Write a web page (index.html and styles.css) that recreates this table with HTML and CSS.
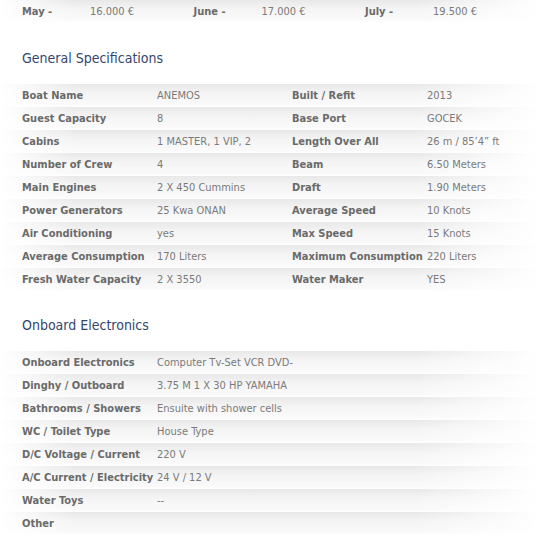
FILE: index.html
```html
<!DOCTYPE html>
<html>
<head>
<meta charset="utf-8">
<link rel="stylesheet" href="styles.css">
</head>
<body>
<div class="page">
  <div class="row prices">
    <span class="lab">May -</span><span class="val">16.000 €</span>
    <span class="lab">June -</span><span class="val">17.000 €</span>
    <span class="lab">July -</span><span class="val">19.500 €</span>
  </div>

  <h2 class="heading first">General Specifications</h2>
  <div class="spec">
    <div class="row"><span class="lab">Boat Name</span><span class="val">ANEMOS</span><span class="lab">Built / Refit</span><span class="val">2013</span></div>
    <div class="row"><span class="lab">Guest Capacity</span><span class="val">8</span><span class="lab">Base Port</span><span class="val">GOCEK</span></div>
    <div class="row"><span class="lab">Cabins</span><span class="val">1 MASTER, 1 VIP, 2</span><span class="lab">Length Over All</span><span class="val">26 m / 85’4” ft</span></div>
    <div class="row"><span class="lab">Number of Crew</span><span class="val">4</span><span class="lab">Beam</span><span class="val">6.50 Meters</span></div>
    <div class="row"><span class="lab">Main Engines</span><span class="val">2 X 450 Cummins</span><span class="lab">Draft</span><span class="val">1.90 Meters</span></div>
    <div class="row"><span class="lab">Power Generators</span><span class="val">25 Kwa ONAN</span><span class="lab">Average Speed</span><span class="val">10 Knots</span></div>
    <div class="row"><span class="lab">Air Conditioning</span><span class="val">yes</span><span class="lab">Max Speed</span><span class="val">15 Knots</span></div>
    <div class="row"><span class="lab">Average Consumption</span><span class="val">170 Liters</span><span class="lab">Maximum Consumption</span><span class="val">220 Liters</span></div>
    <div class="row"><span class="lab">Fresh Water Capacity</span><span class="val">2 X 3550</span><span class="lab">Water Maker</span><span class="val">YES</span></div>
  </div>

  <h2 class="heading">Onboard Electronics</h2>
  <div class="spec">
    <div class="row"><span class="lab">Onboard Electronics</span><span class="val wide">Computer Tv-Set VCR DVD-</span></div>
    <div class="row"><span class="lab">Dinghy / Outboard</span><span class="val wide">3.75 M 1 X 30 HP YAMAHA</span></div>
    <div class="row"><span class="lab">Bathrooms / Showers</span><span class="val wide">Ensuite with shower cells</span></div>
    <div class="row"><span class="lab">WC / Toilet Type</span><span class="val wide">House Type</span></div>
    <div class="row"><span class="lab">D/C Voltage / Current</span><span class="val wide">220 V</span></div>
    <div class="row"><span class="lab">A/C Current / Electricity</span><span class="val wide">24 V / 12 V</span></div>
    <div class="row"><span class="lab">Water Toys</span><span class="val wide">--</span></div>
    <div class="row"><span class="lab">Other</span><span class="val wide"></span></div>
  </div>
</div>
</body>
</html>
```

FILE: styles.css
```css
html, body {
  margin: 0;
  padding: 0;
  background: #fff;
  overflow: hidden;
}
.page {
  width: 545px;
  font-family: "DejaVu Sans Condensed", "DejaVu Sans", sans-serif;
  font-size: 11px;
  color: #777;
}
.row {
  display: grid;
  grid-template-columns: 135px 135px 135px 135px;
  align-items: center;
  height: 23px;
  padding-left: 22px;
  box-sizing: border-box;
  white-space: nowrap;
  background:
    linear-gradient(to right, #fff 0%, rgba(255,255,255,0) 14%, rgba(255,255,255,0) 76%, #fff 99%),
    linear-gradient(to bottom, #e8e8e8 0%, #f4f4f4 40%, #fafafa 90%, #fff 100%);
}
.prices {
  grid-template-columns: 68px 103.5px 68px 103.5px 68px 100px;
  height: 22px;
}
.lab {
  font-weight: bold;
  color: #6a6a6a;
}
.val {
  color: #7a7a7a;
}
.val.wide {
  grid-column: span 3;
}
.heading {
  margin: 0;
  font-size: 14px;
  font-weight: normal;
  color: #34466e;
  height: 20px;
  line-height: 20px;
  padding-left: 22px;
  margin-top: 24px;
  margin-bottom: 16px;
}
.heading.first {
  margin-top: 26px;
}
```
